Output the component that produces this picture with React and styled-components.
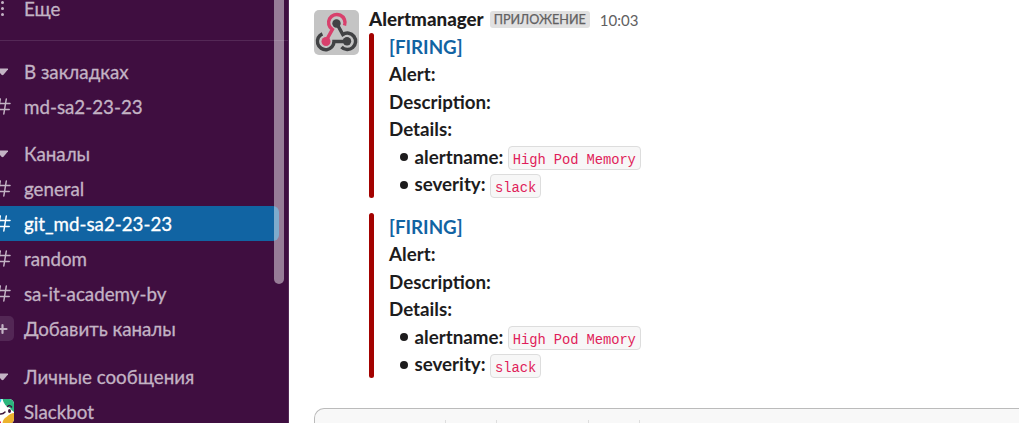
import React from "react";
import styled, { createGlobalStyle } from "styled-components";

const GlobalStyle = createGlobalStyle`
  * { box-sizing: border-box; }
  body {
    margin: 0;
    overflow: hidden;
    background: #fff;
    font-family: Lato, "Noto Sans", sans-serif;
    font-size: 18.75px;
    line-height: 27.5px;
    color: #1d1c1d;
  }
`;

const Workspace = styled.div`
  display: flex;
  width: 100vw;
  height: 100vh;
  overflow: hidden;
`;

const Sidebar = styled.nav`
  position: relative;
  flex: 0 0 289px;
  height: 100%;
  overflow: hidden;
  background: #3f0e40;
  border-right: 1px solid #542856;
`;

const Row = styled.div`
  display: flex;
  align-items: center;
  height: 35px;
  width: 279px;
  padding-left: 24px;
  color: ${(p) => (p.$active ? "#fff" : "#c3b3c4")};
  background: ${(p) => (p.$active ? "#1164a3" : "transparent")};
  border-radius: 0 6px 6px 0;
  white-space: nowrap;
`;

const IconSlot = styled.span`
  display: flex;
  flex: 0 0 25px;
  height: 25px;
  margin-left: -35px;
  margin-right: 10px;
  align-items: center;
  justify-content: center;
  border-radius: 5px;
  overflow: hidden;
  background: ${(p) => (p.$filled ? "#532755" : "transparent")};
  svg { flex: none; }
`;

const Label = styled.span`
  -webkit-text-stroke: 0.3px currentColor;
`;

const More = styled.div`
  height: 41px;
  margin-bottom: 13px;
  border-bottom: 1px solid #542856;
  ${Row} {
    height: 18px;
    line-height: 18px;
  }
`;

const Section = styled.section`
  margin-bottom: 12px;
  ${(p) => p.$last && "margin-top: 13px;"}
`;

const Scrollbar = styled.div`
  position: absolute;
  top: -10px;
  left: 274px;
  width: 10px;
  height: 294px;
  border-radius: 5px;
  background: rgba(255, 255, 255, 0.46);
`;

const Conversation = styled.main`
  display: flex;
  flex: 1;
  flex-direction: column;
  min-width: 0;
  padding-left: 25px;
`;

const Message = styled.article`
  display: flex;
  gap: 10px;
  height: 408px;
  padding-top: 6px;
  flex: none;
`;

const Avatar = styled.div`
  width: 45px;
  height: 45px;
  margin-top: 4px;
  border-radius: 5px;
  background: #c4c4c4;
  overflow: hidden;
`;

const Header = styled.header`
  display: flex;
  align-items: center;
  height: 27px;
`;

const Author = styled.span`
  margin-top: -1px;
  font-weight: 900;
`;

const Badge = styled.span`
  height: 17px;
  margin-left: 6px;
  padding: 0 4px;
  border-radius: 3px;
  background: #e1e1e1;
  color: #616061;
  font-size: 12.6px;
  line-height: 18px;
  -webkit-text-stroke: 0.25px currentColor;
`;

const Time = styled.time`
  margin: 2px 0 0 10px;
  color: #616061;
  font-size: 15px;
`;

const Attachment = styled.div`
  display: flex;
  height: 165px;
  margin-bottom: 15px;
`;

const Bar = styled.div`
  width: 5px;
  height: 165px;
  margin-right: 15px;
  border-radius: 5px;
  background: #a30200;
`;

const Content = styled.div`
  margin-top: -0.3px;
  font-weight: 700;
  white-space: nowrap;
`;

const Line = styled.div`
  height: 27.5px;
`;

const Title = styled(Line)`
  color: #1264a3;
`;

const Item = styled(Line)`
  display: flex;
  align-items: center;
  padding-left: 10.5px;
  gap: 4.5px;
`;

const Bullet = styled.span`
  width: 8px;
  height: 8px;
  margin: 2px 2.5px 0 0;
  border-radius: 50%;
  background: #1d1c1d;
`;

const Code = styled.code`
  height: 24px;
  margin-top: 3.7px;
  padding: 3px 4px 0;
  border: 1px solid #dddddd;
  border-radius: 4px;
  background: #f7f7f7;
  color: #e01e5a;
  font: 400 13.8px/22px "Liberation Mono", monospace;
  letter-spacing: -0.08px;
`;

const Composer = styled.div`
  display: flex;
  flex: none;
  height: 60px;
  padding: 11px 0 0 130px;
  border: 1px solid #bbb;
  border-right: 0;
  border-radius: 10px 0 0 0;
  background: #f8f8f8;
`;

const Tools = styled.div`
  flex: 0 0 ${(p) => p.$width}px;
  height: 25px;
  border-left: 1px solid #ddd;
`;

const stroke = { fill: "none", stroke: "currentColor", strokeLinecap: "round" };

const Hash = () => (
  <svg width="19" height="19" viewBox="0 0 19 19" {...stroke} strokeWidth="1.5">
    <path d="M8.3 2 5.8 17M14.3 2l-2.5 15M3 6.6h15M2.2 12.4h15" />
  </svg>
);
const Caret = () => (
  <svg width="12" height="8" viewBox="0 0 12 8" fill="currentColor">
    <path d="M1.5.5h10q1 .2.4 1.1L7.5 6.8q-1 .9-2 0L1.1 1.6Q.5.7 1.5.5" />
  </svg>
);
const Dots = () => (
  <svg width="5" height="18" viewBox="0 0 5 18" fill="currentColor">
    <circle cx="3.5" cy="2.5" r="1.5" />
    <circle cx="3.5" cy="8.5" r="1.5" />
    <circle cx="3.5" cy="14.5" r="1.5" />
  </svg>
);
const Plus = () => (
  <svg width="12" height="12" viewBox="0 0 12 12" {...stroke} strokeWidth="2.2">
    <path d="M6.5 2v8M2.5 6h8" />
  </svg>
);
const BotFace = () => (
  <svg width="25" height="25" viewBox="0 0 25 25">
    <path fill="#fff" d="M0 0h25v25H0z" />
    <path fill="#36c5f0" d="M0 0h12.5q0 3-2 4L0 9z" />
    <path fill="#2bb67d" d="M13.5 0H25v13q-3-2-4-4-6-2-7.5-9" />
    <path fill="#ecb22e" d="M25 14v11H13.5q0-5 4-7 4-4 7.5-4" />
    <path fill="#e01e5a" d="M0 17q8 0 12 6v2H0z" />
    <g fill="none" stroke="#3f1840" strokeWidth="1.5" strokeLinecap="round">
      <path d="M18.5 7.5q2.5-2 4 .5M8 14q5 2.5 8-1" />
    </g>
    <ellipse cx="20.5" cy="12" rx="1.5" ry="2.1" fill="#3f1840" />
  </svg>
);
const Webhook = () => (
  <svg width="45" height="45" viewBox="0 0 45 45" fill="none" strokeWidth="3.5">
    <path stroke="#d8406c" d="M30.5 15.5A8.2 8.2 0 1 0 18.3 19.5L12.5 30" />
    <path stroke="#414244" d="M8.4 23.8A8.3 8.3 0 1 0 20 31.5H32" />
    <path stroke="#414244" d="M22.5 13l6.3 11.5A8.2 8.2 0 1 1 27.5 37" />
    <circle cx="22.5" cy="13.5" r="4.2" fill="#414244" />
    <circle cx="12" cy="31.5" r="4.5" fill="#d8406c" />
    <circle cx="33" cy="31.3" r="4.2" fill="#414244" />
  </svg>
);

const Channel = ({ name, active }) => (
  <Row $active={active}>
    <IconSlot><Hash /></IconSlot>
    <Label>{name}</Label>
  </Row>
);
const Heading = ({ children }) => (
  <Row>
    <IconSlot><Caret /></IconSlot>
    <Label>{children}</Label>
  </Row>
);

const Alert = () => (
  <Attachment>
    <Bar />
    <Content>
      <Title>[FIRING]</Title>
      <Line>Alert:</Line>
      <Line>Description:</Line>
      <Line>Details:</Line>
      <Item><Bullet />alertname: <Code>High Pod Memory</Code></Item>
      <Item><Bullet />severity: <Code>slack</Code></Item>
    </Content>
  </Attachment>
);

export default function App() {
  return (
    <>
      <GlobalStyle />
      <Workspace>
        <Sidebar>
          <More>
            <Row>
              <IconSlot><Dots /></IconSlot>
              <Label>Еще</Label>
            </Row>
          </More>
          <Section>
            <Heading>В закладках</Heading>
            <Channel name="md-sa2-23-23" />
          </Section>
          <Section>
            <Heading>Каналы</Heading>
            <Channel name="general" />
            <Channel name="git_md-sa2-23-23" active />
            <Channel name="random" />
            <Channel name="sa-it-academy-by" />
            <Row>
              <IconSlot $filled><Plus /></IconSlot>
              <Label>Добавить каналы</Label>
            </Row>
          </Section>
          <Section $last>
            <Heading>Личные сообщения</Heading>
            <Row>
              <IconSlot><BotFace /></IconSlot>
              <Label>Slackbot</Label>
            </Row>
          </Section>
          <Scrollbar />
        </Sidebar>
        <Conversation>
          <Message>
            <Avatar><Webhook /></Avatar>
            <div>
              <Header>
                <Author>Alertmanager</Author>
                <Badge>ПРИЛОЖЕНИЕ</Badge>
                <Time>10:03</Time>
              </Header>
              <Alert />
              <Alert />
            </div>
          </Message>
          <Composer>
            <Tools $width={51} />
            <Tools $width={92} />
            <Tools $width={51} />
            <Tools $width={51} />
          </Composer>
        </Conversation>
      </Workspace>
    </>
  );
}
